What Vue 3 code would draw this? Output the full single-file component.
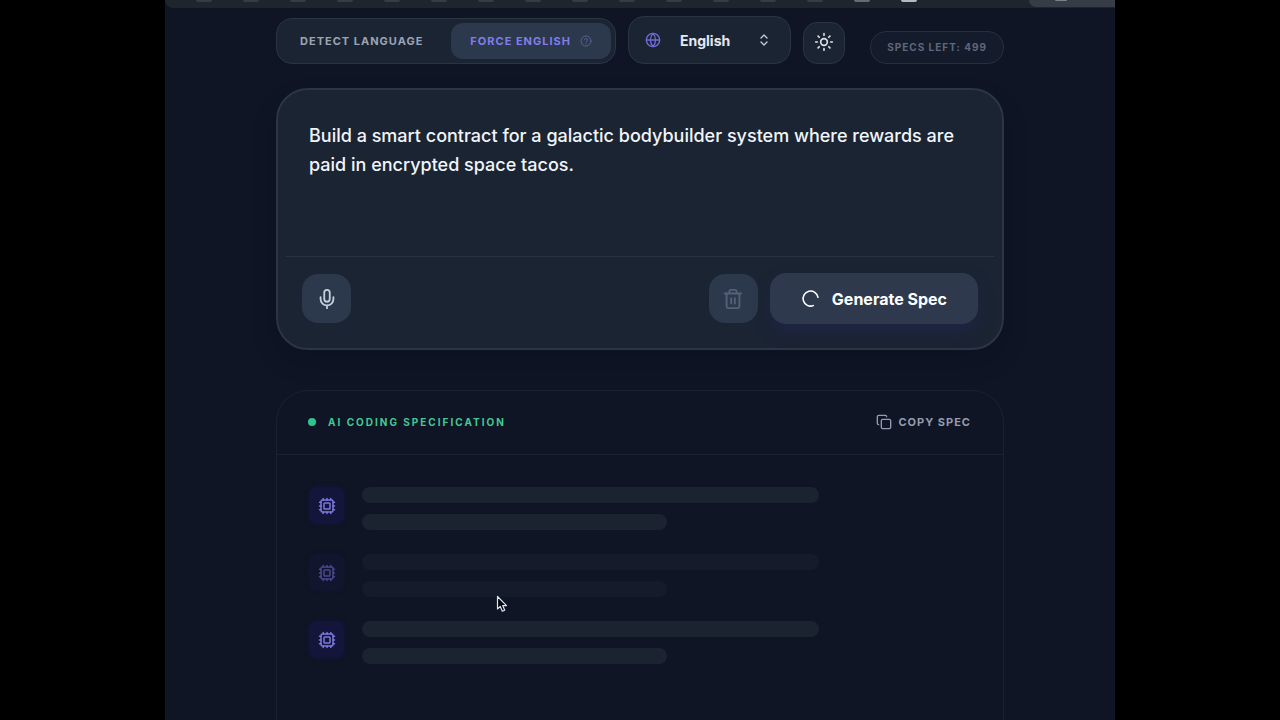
<script setup>
import { ref } from "vue";

const prompt = ref(
  "Build a smart contract for a galactic bodybuilder system where rewards are paid in encrypted space tacos."
);
const language = ref("English");
const specsLeft = ref(499);

// browser tabs, only their lower edge is visible
const tabs = 16;

// loading rows
const skeletons = [
  { id: 1, state: "bright" },
  { id: 2, state: "dim" },
  { id: 3, state: "bright" },
];
</script>

<template>
  <div class="stage">
    <div class="window">
      <div class="browser-bar">
        <span v-for="n in tabs" :key="n" class="tab" :class="{ lit: n === 15, bright: n === 16 }"></span>
        <span class="tab-current"><span class="tab"></span></span>
      </div>

      <main class="page">
        <header class="toolbar">
          <div class="modes">
            <button class="mode" type="button">DETECT LANGUAGE</button>
            <button class="mode selected" type="button">
              FORCE ENGLISH
              <svg class="help" viewBox="0 0 24 24" aria-hidden="true">
                <circle cx="12" cy="12" r="10" />
                <path d="M9.1 9a3 3 0 0 1 5.8 1c0 2-2.9 2.6-2.9 4M12 17h.01" />
              </svg>
            </button>
          </div>

          <div class="language">
            <svg class="globe" viewBox="0 0 24 24" aria-hidden="true">
              <circle cx="12" cy="12" r="10" />
              <path d="M2 12h20M12 2a15 15 0 0 0 0 20M12 2a15 15 0 0 1 0 20" />
            </svg>
            <select v-model="language" aria-label="Language">
              <option>English</option>
            </select>
            <svg class="chevrons" viewBox="0 0 12 16" aria-hidden="true">
              <path d="M3 6l3-3 3 3M3 10l3 3 3-3" />
            </svg>
          </div>

          <button class="theme" type="button" aria-label="Toggle theme">
            <svg viewBox="0 0 24 24" aria-hidden="true">
              <circle cx="12" cy="12" r="4" />
              <path d="M12 2v2M12 20v2M4.9 4.9l1.4 1.4M17.7 17.7l1.4 1.4M2 12h2M20 12h2M6.3 17.7l-1.4 1.4M19.1 4.9l-1.4 1.4" />
            </svg>
          </button>

          <span class="quota">SPECS LEFT: {{ specsLeft }}</span>
        </header>

        <form class="composer" @submit.prevent>
          <textarea v-model="prompt" aria-label="Prompt" spellcheck="false"></textarea>
          <div class="actions">
            <button class="square" type="button" aria-label="Record voice">
              <svg viewBox="0 0 24 24" aria-hidden="true">
                <rect x="9" y="2" width="6" height="13" rx="3" />
                <path d="M19 10v2a7 7 0 0 1-14 0v-2M12 19v3" />
              </svg>
            </button>
            <button class="square trash" type="button" aria-label="Clear">
              <svg viewBox="0 0 24 24" aria-hidden="true">
                <path d="M3 6h18M19 6v14a2 2 0 0 1-2 2H7a2 2 0 0 1-2-2V6M8 6V4a2 2 0 0 1 2-2h4a2 2 0 0 1 2 2v2M10 11v6M14 11v6" />
              </svg>
            </button>
            <button class="generate" type="submit">
              <svg viewBox="0 0 24 24" aria-hidden="true">
                <path d="M21.5 10.5A9.5 9.5 0 1 0 15.5 21" />
              </svg>
              Generate Spec
            </button>
          </div>
        </form>

        <section class="spec">
          <div class="spec-head">
            <h2><span class="dot"></span>AI CODING SPECIFICATION</h2>
            <button class="copy" type="button">
              <svg viewBox="0 0 24 24" aria-hidden="true">
                <rect x="8" y="8" width="14" height="14" rx="2" />
                <path d="M4 16c-1.1 0-2-.9-2-2V4c0-1.1.9-2 2-2h10c1.1 0 2 .9 2 2" />
              </svg>
              COPY SPEC
            </button>
          </div>
          <div class="rows">
            <div v-for="row in skeletons" :key="row.id" class="row" :class="row.state">
              <div class="chip">
                <svg viewBox="0 0 24 24" aria-hidden="true">
                  <rect x="4" y="4" width="16" height="16" rx="2" />
                  <rect x="8" y="8" width="8" height="8" rx="1" />
                  <path d="M7 2v2M12 2v2M17 2v2M7 20v2M12 20v2M17 20v2M2 7h2M2 12h2M2 17h2M20 7h2M20 12h2M20 17h2" />
                </svg>
              </div>
              <div class="lines">
                <div class="line"></div>
                <div class="line short"></div>
              </div>
            </div>
          </div>
        </section>
      </main>

      <svg class="pointer" viewBox="0 0 12 18" aria-hidden="true">
        <path d="M1.5 1.5v12.500l2.800-2.600 2 4.800 2.400-1-2-4.600h3.800z" />
      </svg>
    </div>
  </div>
</template>

<style>
body {
  margin: 0;
  background: #000;
}
</style>

<style scoped>
* {
  box-sizing: border-box;
}

.stage {
  height: 100vh;
  overflow: hidden;
  background: #000;
  font-family: Inter, "Liberation Sans", sans-serif;
}

.window {
  position: relative;
  display: flex;
  flex-direction: column;
  max-width: 950px;
  height: 100%;
  margin: 0 auto;
  background: #0f1524;
}

svg {
  display: block;
  flex: none;
  fill: none;
  stroke: currentColor;
  stroke-width: 2;
  stroke-linecap: round;
  stroke-linejoin: round;
}

button,
select,
textarea {
  font-family: inherit;
  border: 0;
  margin: 0;
}

button {
  display: flex;
  align-items: center;
  justify-content: center;
  cursor: pointer;
}

/* browser strip */
.browser-bar {
  display: flex;
  flex: none;
  gap: 31px;
  height: 8px;
  padding-left: 31px;
  border-radius: 0 0 0 8px;
  background: #1f252d;
}

.tab {
  width: 16px;
  height: 2px;
  border-radius: 0 0 4px 4px;
  background: #363d45;
}

.tab.lit {
  background: #656c75;
}

.tab.bright {
  background: #b4bac2;
}

.tab-current {
  display: flex;
  justify-content: center;
  width: 86px;
  height: 7px;
  margin-left: auto;
  padding-right: 22px;
  border-radius: 0 0 0 10px;
  background: #373d47;
}

.tab-current .tab {
  width: 12px;
  height: 1px;
  background: #7b828c;
}

.page {
  display: flex;
  flex: 1;
  flex-direction: column;
  width: 728px;
  max-width: 100%;
  margin: 0 auto;
  padding-top: 8px;
}

/* toolbar */
.toolbar {
  display: flex;
  align-items: flex-end;
  gap: 12px;
}

.modes {
  display: flex;
  height: 46px;
  padding: 4px;
  border: 1px solid #2b3442;
  border-radius: 16px;
  background: #1b2432;
}

.mode {
  gap: 9px;
  padding: 0 19px;
  border-radius: 12px;
  background: transparent;
  color: #9ba4b5;
  font-size: 11px;
  font-weight: 700;
  letter-spacing: 1px;
}

.mode:first-child {
  margin-right: 9px;
}

.mode.selected {
  background: #2c384c;
  color: #807eea;
}

.help {
  width: 12px;
  height: 12px;
  color: #5a5f94;
}

.language {
  display: flex;
  align-items: center;
  width: 163px;
  height: 48px;
  padding: 0 20px 0 16px;
  border: 1px solid #2b3442;
  border-radius: 16px;
  background: #1b2432;
}

.globe {
  width: 16px;
  height: 16px;
  color: #6f6ad6;
}

select {
  flex: 1;
  min-width: 0;
  padding: 0 0 0 19px;
  appearance: none;
  background: transparent;
  color: #e4e9f1;
  font-size: 14px;
  font-weight: 700;
}

.chevrons {
  width: 12px;
  height: 16px;
  color: #c3cad6;
}

.chevrons path {
  stroke-width: 1.4;
}

.theme {
  width: 42px;
  height: 42px;
  padding: 0 0 2px;
  border: 1px solid #2b3442;
  border-radius: 14px;
  background: #1b2432;
  color: #dbe2ec;
}

.theme svg {
  width: 20px;
  height: 20px;
}

.quota {
  height: 33px;
  margin-left: auto;
  padding: 0 16px;
  border: 1px solid #272f3f;
  border-radius: 16px;
  background: #141b2b;
  color: #5f687b;
  font-size: 10px;
  font-weight: 700;
  line-height: 31px;
  letter-spacing: 1px;
}

/* prompt card */
.composer {
  margin-top: 24px;
  padding: 8px;
  border: 2px solid #2c3543;
  border-radius: 32px;
  background: #1b2432;
  box-shadow: 0 12px 24px rgba(5, 10, 25, 0.2);
}

textarea {
  display: block;
  width: 100%;
  height: 158px;
  padding: 23px;
  resize: none;
  outline: none;
  background: transparent;
  color: #f1f5fa;
  font-size: 18px;
  font-weight: 500;
  line-height: 29px;
}

.actions {
  display: flex;
  align-items: center;
  gap: 12px;
  padding: 16px;
  border-top: 1px solid #2a3341;
}

.square {
  width: 49px;
  height: 49px;
  padding: 0;
  border-radius: 16px;
  background: #2c384b;
  color: #c3cedf;
}

.square svg {
  width: 22px;
  height: 22px;
}

.trash {
  margin-left: auto;
  color: #53617a;
}

.generate {
  gap: 12px;
  height: 51px;
  padding: 0 31px;
  border-radius: 16px;
  background: #2e394d;
  box-shadow: 0 8px 16px rgba(35, 35, 95, 0.4);
  color: #fff;
  font-size: 16px;
  font-weight: 700;
}

.generate svg {
  width: 19px;
  height: 19px;
}

/* specification panel */
.spec {
  flex: 1;
  margin-top: 40px;
  border: 1px solid #192130;
  border-bottom: 0;
  border-radius: 32px 32px 0 0;
}

.spec-head {
  display: flex;
  align-items: center;
  justify-content: space-between;
  height: 64px;
  padding: 0 32px 2px 31px;
  border-bottom: 1px solid #192130;
}

h2 {
  display: flex;
  align-items: center;
  gap: 12px;
  margin: 0;
  color: #45c895;
  font-size: 10px;
  font-weight: 700;
  letter-spacing: 2px;
}

.dot {
  width: 8px;
  height: 8px;
  border-radius: 50%;
  background: #2fc48d;
}

.copy {
  gap: 6px;
  padding: 0;
  background: transparent;
  color: #949db0;
  font-size: 11px;
  font-weight: 700;
  letter-spacing: 1px;
}

.copy svg {
  width: 16px;
  height: 16px;
}

.rows {
  display: flex;
  flex-direction: column;
  gap: 24px;
  padding: 32px;
}

.row {
  display: flex;
  align-items: flex-start;
  gap: 18px;
}

.chip {
  display: flex;
  align-items: center;
  justify-content: center;
  width: 35px;
  height: 37px;
  border-radius: 8px;
  background: #13153a;
  box-shadow: 0 0 4px #13153a;
  color: #7b78dc;
}

.chip svg {
  width: 18px;
  height: 18px;
}

.lines {
  display: flex;
  flex: 1;
  flex-direction: column;
  gap: 11px;
}

.line {
  width: 75%;
  height: 16px;
  border-radius: 8px;
  background: #1b2331;
}

.line.short {
  width: 50%;
}

.dim .line {
  background: #141b2a;
}

.dim .chip {
  background: #11152d;
  box-shadow: 0 0 4px #11152d;
  color: #49478d;
}

/* mouse pointer floating over the page */
.pointer {
  position: absolute;
  top: 595px;
  left: 331px;
  width: 12px;
  height: 18px;
}

.pointer path {
  fill: #05070c;
  stroke: #dfe3ea;
  stroke-width: 1.2;
}
</style>
